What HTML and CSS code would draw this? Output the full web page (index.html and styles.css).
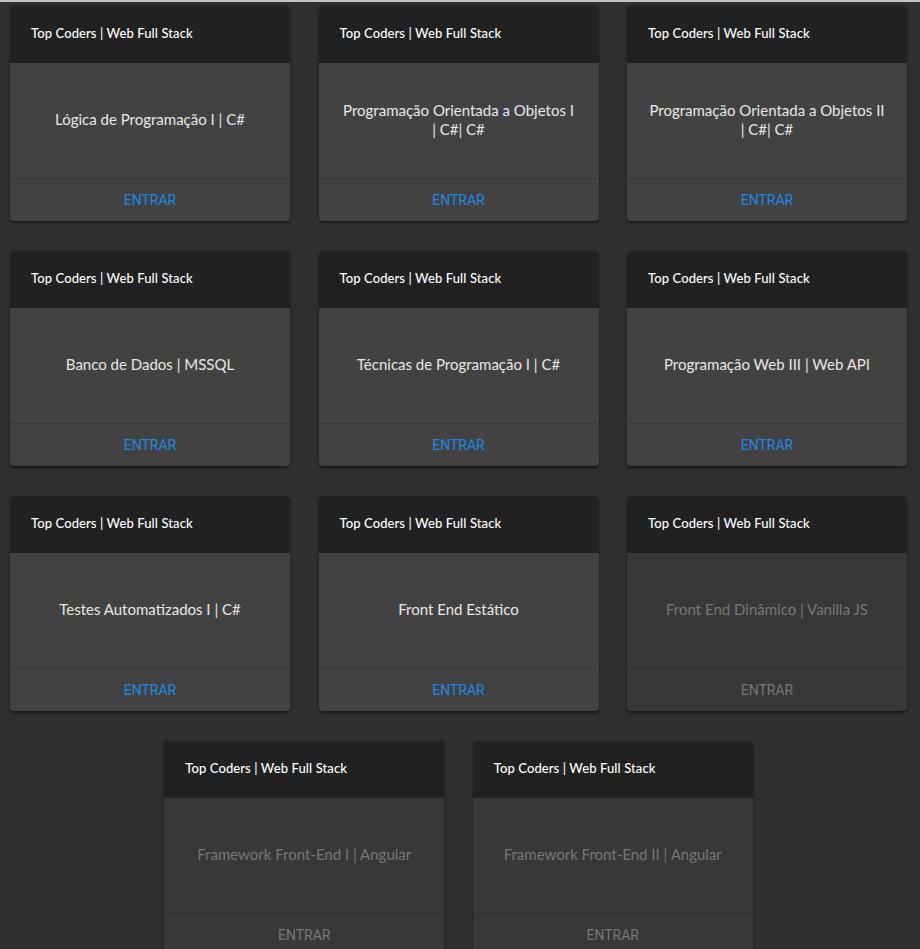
FILE: index.html
```html
<!DOCTYPE html>
<html lang="pt-BR">
<head>
<meta charset="utf-8">
<title>Cursos</title>
<link rel="stylesheet" href="styles.css">
</head>
<body>
<div class="topline"></div>
<main class="grid">
  <div class="card">
    <div class="card-head">Top Coders | Web Full Stack</div>
    <div class="card-body">Lógica de Programação I | C#</div>
    <div class="card-foot"><a class="btn">ENTRAR</a></div>
  </div>
  <div class="card">
    <div class="card-head">Top Coders | Web Full Stack</div>
    <div class="card-body">Programação Orientada a Objetos I | C#| C#</div>
    <div class="card-foot"><a class="btn">ENTRAR</a></div>
  </div>
  <div class="card">
    <div class="card-head">Top Coders | Web Full Stack</div>
    <div class="card-body">Programação Orientada a Objetos II | C#| C#</div>
    <div class="card-foot"><a class="btn">ENTRAR</a></div>
  </div>
  <div class="card">
    <div class="card-head">Top Coders | Web Full Stack</div>
    <div class="card-body">Banco de Dados | MSSQL</div>
    <div class="card-foot"><a class="btn">ENTRAR</a></div>
  </div>
  <div class="card">
    <div class="card-head">Top Coders | Web Full Stack</div>
    <div class="card-body">Técnicas de Programação I | C#</div>
    <div class="card-foot"><a class="btn">ENTRAR</a></div>
  </div>
  <div class="card">
    <div class="card-head">Top Coders | Web Full Stack</div>
    <div class="card-body">Programação Web III | Web API</div>
    <div class="card-foot"><a class="btn">ENTRAR</a></div>
  </div>
  <div class="card">
    <div class="card-head">Top Coders | Web Full Stack</div>
    <div class="card-body">Testes Automatizados I | C#</div>
    <div class="card-foot"><a class="btn">ENTRAR</a></div>
  </div>
  <div class="card">
    <div class="card-head">Top Coders | Web Full Stack</div>
    <div class="card-body">Front End Estático</div>
    <div class="card-foot"><a class="btn">ENTRAR</a></div>
  </div>
  <div class="card disabled">
    <div class="card-head">Top Coders | Web Full Stack</div>
    <div class="card-body">Front End Dinâmico | Vanilla JS</div>
    <div class="card-foot"><a class="btn">ENTRAR</a></div>
  </div>
  <div class="card disabled">
    <div class="card-head">Top Coders | Web Full Stack</div>
    <div class="card-body">Framework Front-End I | Angular</div>
    <div class="card-foot"><a class="btn">ENTRAR</a></div>
  </div>
  <div class="card disabled">
    <div class="card-head">Top Coders | Web Full Stack</div>
    <div class="card-body">Framework Front-End II | Angular</div>
    <div class="card-foot"><a class="btn">ENTRAR</a></div>
  </div>
</main>
</body>
</html>
```
FILE: styles.css
```css
html, body {
  margin: 0;
  padding: 0;
  background: #303030;
  font-family: "Lato", "Noto Sans", sans-serif;
}

.topline {
  height: 2px;
  background: #c4c4c4;
}

.grid {
  width: 917px;
  display: flex;
  flex-wrap: wrap;
  justify-content: center;
  column-gap: 28.5px;
  row-gap: 30px;
  padding-top: 4px;
}

.card {
  width: 280px;
  height: 215px;
  display: flex;
  flex-direction: column;
  background: #424242;
  border-radius: 4px;
  overflow: hidden;
  box-shadow: 0 2px 2px rgba(0, 0, 0, 0.35), 0 1px 4px rgba(0, 0, 0, 0.2);
}

.card-head {
  height: 57px;
  flex: none;
  background: #212121;
  color: #ffffff;
  font-size: 13px;
  font-weight: 500;
  display: flex;
  align-items: center;
  padding-left: 21px;
  padding-bottom: 3px;
  box-sizing: border-box;
  letter-spacing: 0.1px;
}

.card-body {
  height: 116px;
  flex: none;
  display: flex;
  align-items: center;
  justify-content: center;
  text-align: center;
  padding: 0 22px 2px;
  box-sizing: border-box;
  color: #e8e8e8;
  font-size: 15px;
  line-height: 19px;
  border-bottom: 1px solid #393939;
}

.card-foot {
  flex: 1;
  display: flex;
  align-items: center;
  justify-content: center;
}

.btn {
  color: #1e88e5;
  font-family: "Roboto", "Lato", sans-serif;
  font-size: 14px;
  cursor: pointer;
  padding-bottom: 1px;
}

.card.disabled {
  background: #383838;
}

.card.disabled .card-body {
  color: #777777;
  border-bottom-color: #303030;
}

.card.disabled .btn {
  color: #777777;
}
```
